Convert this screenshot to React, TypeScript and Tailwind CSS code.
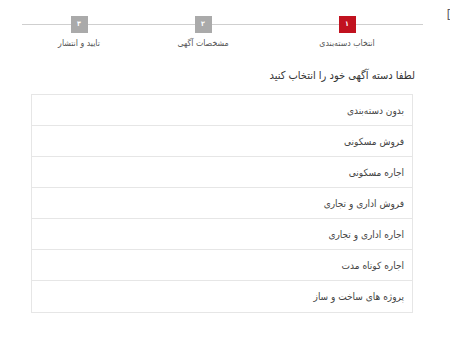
const steps = [
  { n: '۳', label: 'تایید و انتشار', active: false, ml: 'ml-[39px]' },
  { n: '۲', label: 'مشخصات آگهی', active: false, ml: 'ml-[44px]' },
  { n: '۱', label: 'انتخاب دسته‌بندی', active: true, ml: 'ml-[64px]' },
];

const categories = [
  'بدون دسته‌بندی',
  'فروش مسکونی',
  'اجاره مسکونی',
  'فروش اداری و تجاری',
  'اجاره اداری و تجاری',
  'اجاره کوتاه مدت',
  'پروژه های ساخت و ساز',
];

export default function App() {
  return (
    <div className="relative w-[450px] h-[349px] bg-white overflow-hidden font-['DejaVu_Sans_Condensed','DejaVu_Sans',sans-serif]">
      {/* stray bracket at the right edge */}
      <span className="absolute right-[-1px] top-[9px] text-[12px] leading-none text-[#555]">[</span>

      {/* Stepper */}
      <div className="relative pt-[16px] h-[56px]">
        <div className="absolute left-[22px] top-[24px] w-[401px] h-px bg-[#cfcfcf]" />
        <div className="relative flex">
          {steps.map((s) => (
            <div key={s.n} className={`${s.ml} w-[80px] flex flex-col items-center`}>
              <div
                className={`w-[17px] h-[17px] flex items-center justify-center text-white text-[7px] font-bold leading-none ${
                  s.active ? 'bg-[#c1121f]' : 'bg-[#aaaaaa]'
                }`}
              >
                {s.n}
              </div>
              <div dir="rtl" className="mt-[3px] text-[8.7px] leading-[14px] text-[#555] whitespace-nowrap">
                {s.label}
              </div>
            </div>
          ))}
        </div>
      </div>

      {/* Title */}
      <div dir="rtl" className="pr-[35px] pt-[11px] text-[11px] leading-[18px] text-[#333]">
        لطفا دسته آگهی خود را انتخاب کنید
      </div>

      {/* Category list */}
      <div dir="rtl" className="ml-[31px] mr-[37px] mt-[9px] border border-[#e6e6e6]">
        {categories.map((c, i) => (
          <div
            key={c}
            className={`h-[31px] flex items-center pr-[8px] text-[10px] text-[#444] ${
              i < categories.length - 1 ? 'border-b border-[#e6e6e6]' : ''
            }`}
          >
            {c}
          </div>
        ))}
      </div>
    </div>
  );
}
